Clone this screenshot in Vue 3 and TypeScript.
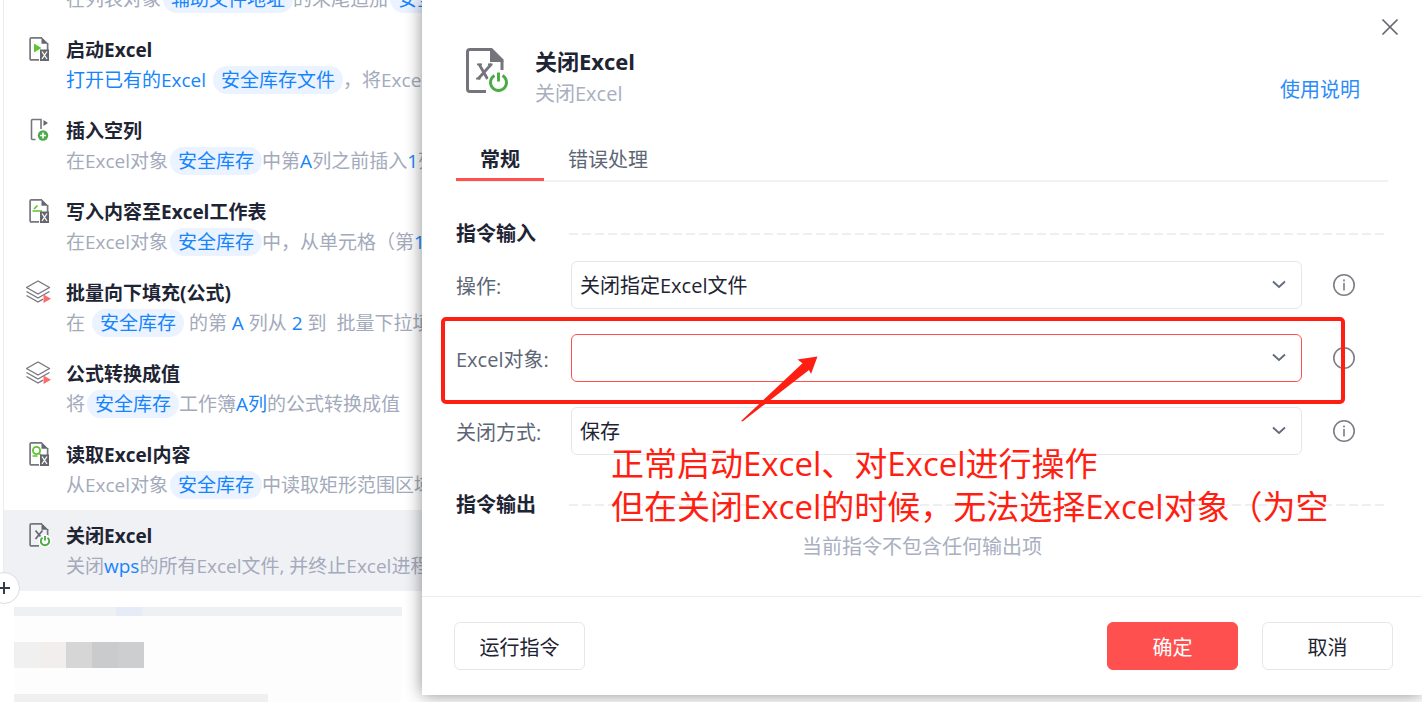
<script setup lang="ts">
import { ref } from 'vue'

type Kind = 'text' | 'chip' | 'link'
interface Segment {
  kind: Kind
  text: string
}
interface Step {
  icon: string
  title: string
  parts: Segment[]
  active?: boolean
}

const t = (text: string): Segment => ({ kind: 'text', text })
const c = (text: string): Segment => ({ kind: 'chip', text })
const l = (text: string): Segment => ({ kind: 'link', text })

const steps: Step[] = [
  { icon: 'layers', title: '列表添加一项', parts: [t('在列表对象'), c('辅助文件地址'), t('的末尾追加'), c('安全库存')] },
  { icon: 'start', title: '启动Excel', parts: [l('打开已有的Excel'), t(' '), c('安全库存文件'), t('，将Excel对象保存到')] },
  { icon: 'column', title: '插入空列', parts: [t('在Excel对象'), c('安全库存'), t('中第'), l('A'), t('列之前插入'), l('1'), t('列')] },
  { icon: 'write', title: '写入内容至Excel工作表', parts: [t('在Excel对象'), c('安全库存'), t('中，从单元格（第'), l('1'), t('行')] },
  { icon: 'layers', title: '批量向下填充(公式)', parts: [t('在 '), c('安全库存'), t(' 的第 '), l('A'), t(' 列从 '), l('2'), t(' 到  批量下拉填充')] },
  { icon: 'layers', title: '公式转换成值', parts: [t('将'), c('安全库存'), t('工作簿'), l('A列'), t('的公式转换成值')] },
  { icon: 'read', title: '读取Excel内容', parts: [t('从Excel对象'), c('安全库存'), t('中读取矩形范围区域')] },
  { icon: 'close', title: '关闭Excel', active: true, parts: [t('关闭'), l('wps'), t('的所有Excel文件, 并终止Excel进程')] },
]

const fields = [
  { id: 'operation', label: '操作:', options: ['关闭指定Excel文件'], error: false },
  { id: 'target', label: 'Excel对象:', options: [''], error: true },
  { id: 'mode', label: '关闭方式:', options: ['保存'], error: false },
]

const tabs = ['常规', '错误处理']
const current = ref(0)
</script>

<template>
  <div class="page">
    <aside class="flow">
      <ul class="steps">
        <li v-for="(step, i) in steps" :key="i" class="step" :class="{ active: step.active }">
          <svg class="step-icon" viewBox="0 0 26 26" width="26" height="26" fill="none" aria-hidden="true">
            <template v-if="step.icon === 'layers'">
              <path d="M12 2 23.500 8.500 12 15 .5 8.500Z" stroke="#75777e" stroke-width="1.400" stroke-linejoin="round" />
              <path d="M.5 12.500 12 19l11.500-6.500M.5 16.500 12 23l5-2.800" stroke="#75777e" stroke-width="1.400" stroke-linejoin="round" />
              <path d="M17.500 15.500 25 19.800l-7.500 4.200Z" fill="#ff6b6b" />
            </template>
            <template v-else-if="step.icon === 'column'">
              <path d="M9.500 22.500H6.500a1 1 0 0 1-1-1V3.500a1 1 0 0 1 1-1H15V12" stroke="#75777e" stroke-width="1.600" />
              <path d="M17.500 3 22 6l-4.500 3z" fill="#65676e" />
              <circle cx="17" cy="18.500" r="5.200" fill="#4bab45" />
              <path d="M17 15.500v6M14 18.500h6" stroke="#fff" stroke-width="1.600" />
            </template>
            <template v-else>
              <path d="M16 1.900H5.300a1.200 1.200 0 0 0-1.200 1.200v19.600a1.200 1.200 0 0 0 1.200 1.200H13M21.600 7v7" stroke="#75777e" stroke-width="1.700" />
              <path d="M15.500 1 22.400 7.800H15.500Z" fill="#65676e" />
              <path v-if="step.icon === 'start'" d="M8 7.500 15.500 12 8 16.500Z" fill="#5cc52f" />
              <path v-if="step.icon === 'write'" d="M6.500 13h9.500M8 11l3.500-3.500" stroke="#5cc52f" stroke-width="1.600" />
              <g v-if="step.icon === 'read'" stroke="#5cc52f">
                <circle cx="10.500" cy="9.500" r="3.600" stroke-width="1.800" />
                <path d="m13 12 3 3.500M6.500 15h5" stroke-width="1.600" />
              </g>
              <template v-if="step.icon === 'close'">
                <path d="M9.500 8.500l7 8.500M16.500 8.500l-7 8.500" stroke="#65676e" stroke-width="1.700" />
                <circle cx="19" cy="19" r="6.500" fill="#fff" />
                <path d="M16.500 15.700a4.200 4.200 0 1 0 5 0M19 14v4.500" stroke="#4bab45" stroke-width="1.900" />
              </template>
              <template v-else>
                <path d="M14 13.500h9V25h-9Z" fill="#65676e" />
                <path d="m16 15.500 5 7.500m0-7.500-5 7.500" stroke="#fff" stroke-width="1.300" />
              </template>
            </template>
          </svg>
          <div class="step-body">
            <strong class="step-title">{{ step.title }}</strong>
            <p class="step-desc"><span v-for="(part, j) in step.parts" :key="j" :class="part.kind">{{ part.text }}</span></p>
          </div>
        </li>
      </ul>
      <button class="add" type="button" aria-label="添加">
        <svg viewBox="0 0 14 14" width="14" height="14" aria-hidden="true"><path d="M7 1v12M1 7h12" stroke="#353b48" stroke-width="2" /></svg>
      </button>
      <div class="mosaic" aria-hidden="true">
        <div class="strip"><i class="tint"></i></div>
        <div class="blocks"><i class="b1"></i><i class="b2"></i><i class="b3"></i><i class="b4"></i><i class="b5"></i></div>
        <div class="tail"></div>
      </div>
    </aside>

    <section class="dialog" role="dialog" aria-labelledby="dialog-title">
      <button class="dismiss" type="button" aria-label="关闭">
        <svg viewBox="0 0 18 18" width="18" height="18" aria-hidden="true"><path d="m1.500 1.500 15 15m0-15-15 15" stroke="#65676d" stroke-width="1.700" /></svg>
      </button>

      <header class="head">
        <svg class="head-icon" viewBox="0 0 46 48" width="46" height="48" fill="none" aria-hidden="true">
          <path d="M27 3.500H6A2.500 2.500 0 0 0 3.500 6v37A2.500 2.500 0 0 0 6 45.500h16M38 15v9" stroke="#75747c" stroke-width="3" />
          <path d="M26 2h2l11.500 11.500V16H26Z" fill="#75747c" />
          <path d="M15 18 23.500 33M27.500 18 14 33" stroke="#75747c" stroke-width="2.800" />
          <path d="M13 18.300h5M24 18.300h4.500M12 32.700h4.500" stroke="#75747c" stroke-width="1.800" />
          <circle cx="34.500" cy="36.500" r="11" fill="#fff" />
          <path d="M30.500 29.500a8 8 0 1 0 8 0M34.500 26.500v9" stroke="#4bab45" stroke-width="2.900" />
        </svg>
        <div class="head-text">
          <h1 id="dialog-title">关闭Excel</h1>
          <p>关闭Excel</p>
        </div>
        <a class="help" href="#help">使用说明</a>
      </header>

      <nav class="tabs" role="tablist">
        <button v-for="(tab, i) in tabs" :key="tab" type="button" role="tab" :aria-selected="current === i" :class="{ on: current === i }" @click="current = i">{{ tab }}</button>
      </nav>

      <div class="content">
        <h2 class="group">指令输入</h2>
        <div class="fields">
          <div v-for="field in fields" :key="field.id" class="field">
            <label :for="field.id">{{ field.label }}</label>
            <div class="control">
              <select :id="field.id" :class="{ error: field.error }">
                <option v-for="o in field.options" :key="o">{{ o }}</option>
              </select>
              <svg class="chevron" viewBox="0 0 14 9" width="14" height="9" fill="none" aria-hidden="true"><path d="m1 1.500 6 5.500 6-5.500" stroke="#626b7a" stroke-width="1.800" /></svg>
            </div>
            <svg class="info" viewBox="0 0 24 24" width="24" height="24" fill="none" role="img" aria-label="说明">
              <circle cx="12" cy="12" r="10.200" stroke="#7c7e85" stroke-width="1.600" />
              <path d="M12 10v7.500M12 6.500v2" stroke="#7c7e85" stroke-width="1.600" />
            </svg>
          </div>
        </div>
        <h2 class="group output">指令输出</h2>
        <p class="empty">当前指令不包含任何输出项</p>
      </div>

      <footer class="foot">
        <button type="button">运行指令</button>
        <span class="spring"></span>
        <button type="button" class="primary">确定</button>
        <button type="button">取消</button>
      </footer>

      <div class="mark"></div>
      <svg class="arrow" viewBox="0 0 80 68" width="80" height="68" aria-hidden="true">
        <path d="M77.500 1.500 71 19l-2-4L2.500 66.500l-1.500-.5L62.500 8.300 57.500 4.500Z" fill="#ff1e12" />
      </svg>
      <p class="note">正常启动Excel、对Excel进行操作<br />但在关闭Excel的时候，无法选择Excel对象（为空</p>
    </section>
  </div>
</template>

<style>
body {
  margin: 0;
}
</style>

<style scoped>
.page {
  display: flex;
  align-items: flex-start;
  height: 100vh;
  overflow: hidden;
  background: #fff;
  color: #1e2433;
  font-family: "Open Sans", "Noto Sans CJK SC", sans-serif;
  font-size: 20px;
}
.page *,
.page {
  box-sizing: border-box;
}
h1,
h2,
p,
ul {
  margin: 0;
  padding: 0;
}
button,
select {
  font: inherit;
  color: inherit;
}

.flow {
  position: relative;
  flex: none;
  width: 422px;
  height: 100%;
  padding-left: 3px;
}
.steps {
  margin-top: -57px;
  border-left: 1px solid #ececf0;
  list-style: none;
}
.step {
  display: flex;
  gap: 14px;
  padding: 11px 0 10px 22px;
}
.step.active {
  background: #f0f1f5;
}
.step-icon {
  flex: none;
  margin-top: 1px;
}
.step-body {
  flex: 1;
  min-width: 0;
  font-size: 19px;
  line-height: 30px;
}
.step-title {
  display: block;
  font-weight: 700;
}
.step-desc {
  height: 30px;
  overflow: hidden;
  white-space: pre;
  color: #a3aabb;
}
.link {
  color: #1684fc;
}
.chip {
  display: inline-block;
  margin-left: 2px;
  padding: 0 8px;
  border-radius: 14px;
  background: #eaf3ff;
  color: #1684fc;
  line-height: 28px;
}
.add {
  position: absolute;
  top: 572px;
  left: -12px;
  display: grid;
  place-items: center;
  width: 32px;
  height: 32px;
  padding: 0;
  border: 1px solid #dcdcdf;
  border-radius: 50%;
  background: #fff;
}
.mosaic {
  margin: 16px 20px 0 11px;
  background: #fdfdfd;
}
.strip {
  height: 9px;
  padding-left: 102px;
  background: #eef0f4;
}
.strip i {
  display: block;
  width: 26px;
  height: 9px;
  background: #e5ecf8;
}
.blocks {
  display: flex;
  padding: 26px 0;
}
.blocks i {
  width: 26px;
  height: 26px;
}
.b1 { background: #f0f0f0; }
.b2 { background: #f3eeee; }
.b3 { background: #d6d6d6; }
.b4 { background: #c9cbcc; }
.b5 { background: #cdced0; }
.tail {
  width: 254px;
  height: 12px;
  background: #f0f0f0;
}

.dialog {
  position: relative;
  flex: 1;
  min-width: 0;
  background: #fff;
  box-shadow: 0 0 16px rgba(0, 0, 0, 0.45);
}
.dismiss {
  position: absolute;
  top: 18px;
  right: 23px;
  display: grid;
  padding: 0;
  border: 0;
  background: none;
}
.head {
  display: flex;
  align-items: flex-start;
  padding: 46px 62px 0 42px;
}
.head-text {
  flex: 1;
  margin-left: 25px;
}
.head h1 {
  font-size: 22px;
  line-height: 30px;
}
.head p {
  line-height: 36px;
  color: #a9afbf;
}
.help {
  margin-top: 29px;
  color: #2d8cf7;
  line-height: 30px;
  text-decoration: none;
}
.tabs {
  display: flex;
  margin: 26px 34px 0;
  border-bottom: 2px solid #f0f1f5;
}
.tabs button {
  height: 43px;
  margin-bottom: -1px;
  padding: 0 24px;
  border: 0;
  border-bottom: 3px solid transparent;
  background: none;
  color: #5d6675;
}
.tabs button.on {
  border-bottom-color: #ff5050;
  color: #1e2433;
  font-weight: 700;
}
.content {
  padding: 37px 34px 34px;
}
.group {
  display: flex;
  align-items: center;
  gap: 33px;
  font-size: 20px;
  line-height: 30px;
}
.group::after {
  content: "";
  flex: 1;
  height: 2px;
  background: repeating-linear-gradient(90deg, #efeff0 0 9px, transparent 9px 13px);
}
.fields {
  display: grid;
  gap: 25px;
  margin-top: 12px;
}
.field {
  display: flex;
  align-items: center;
  padding-right: 32px;
}
.field label {
  width: 115px;
  color: #5d6675;
}
.control {
  position: relative;
  flex: 1;
}
.control select {
  display: block;
  width: 100%;
  height: 48px;
  padding: 0 40px 0 8px;
  border: 1px solid #e6e7ec;
  border-radius: 6px;
  background: #fff;
  appearance: none;
}
.control select.error {
  border-color: #ff5050;
}
.chevron {
  position: absolute;
  top: 19px;
  right: 16px;
}
.info {
  margin-left: 30px;
}
.output {
  margin-top: 35px;
}
.empty {
  margin-top: 12px;
  color: #a9afbf;
  line-height: 30px;
  text-align: center;
}
.foot {
  display: flex;
  gap: 24px;
  padding: 25px 29px 25px 32px;
  border-top: 1px solid #ececf3;
}
.foot button {
  width: 131px;
  height: 48px;
  padding: 0;
  border: 1px solid #e6e7ec;
  border-radius: 6px;
  background: #fff;
}
.foot .primary {
  border-color: #ff5050;
  background: #ff5050;
  color: #fff;
}
.spring {
  flex: 1;
}
.mark {
  position: absolute;
  top: 317px;
  left: 19px;
  right: 77px;
  height: 87px;
  border: 4px solid #ff1e12;
  border-radius: 5px;
  pointer-events: none;
}
.arrow {
  position: absolute;
  top: 355px;
  left: 318px;
  pointer-events: none;
}
.note {
  position: absolute;
  top: 442px;
  left: 189px;
  color: #ff1e12;
  font-size: 33px;
  line-height: 43px;
  white-space: nowrap;
  pointer-events: none;
}
</style>
